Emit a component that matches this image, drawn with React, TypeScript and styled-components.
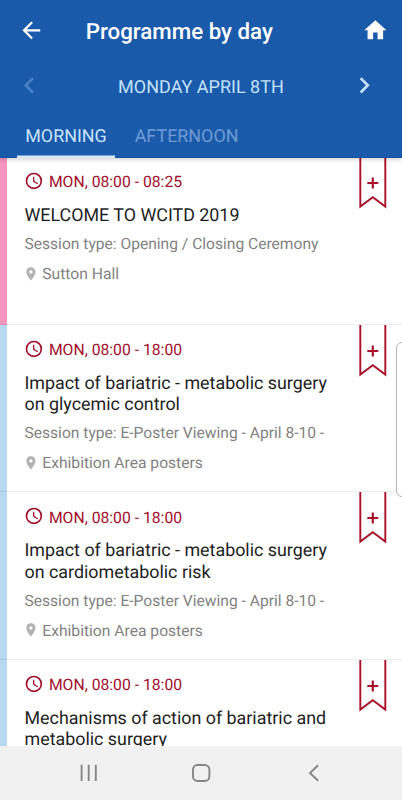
import React from 'react';
import styled, { createGlobalStyle } from 'styled-components';

const Global = createGlobalStyle`
  * { box-sizing: border-box; }
  body { margin: 0; background: #fff; font-family: Roboto, sans-serif; text-rendering: geometricPrecision; }
`;

const Screen = styled.div`
  position: relative;
  display: flex;
  flex-direction: column;
  width: 402px;
  height: 800px;
  overflow: hidden;
  background: #fff;
`;

const Header = styled.header`
  position: relative;
  z-index: 1;
  flex: none;
  height: 158px;
  background: #1a5aaa;
  border-bottom: 1px solid #1451a0;
  box-shadow: 0 1px 5px rgba(0, 0, 0, 0.22);
`;

const TitleBar = styled.div`
  display: flex;
  align-items: center;
  height: 64px;
  padding: 0 13.7px 0 18.2px;
`;

const BarIcon = styled.svg`
  flex: none;
  width: 26.7px;
  height: 26.7px;
  margin-bottom: 2.6px;
  fill: #fff;
`;

const Title = styled.h1`
  flex: 1;
  margin: 0;
  padding-left: 40.8px;
  font-size: 22.3px;
  font-weight: 500;
  line-height: 65px;
  color: #fff;
`;

const DateBar = styled.div`
  display: flex;
  align-items: center;
  justify-content: space-between;
  height: 46px;
  padding: 0 21.9px 0 13px;
`;

const Chevron = styled.svg<{ $dim?: boolean }>`
  flex: none;
  width: 32.6px;
  height: 32.6px;
  margin-bottom: 3px;
  fill: ${(p) => (p.$dim ? '#4a80c6' : '#c3e2fb')};
`;

const DateLabel = styled.div`
  padding: 1px 0 0 8.8px;
  font-size: 18px;
  line-height: 47px;
  color: #c3e2fb;
`;

const Tabs = styled.nav`
  display: flex;
  height: 48px;
  padding-left: 17px;
`;

const Tab = styled.div<{ $active?: boolean }>`
  height: 48px;
  width: ${(p) => (p.$active ? '98px' : 'auto')};
  padding-left: ${(p) => (p.$active ? '8.2px' : '19.7px')};
  font-size: 17.92px;
  line-height: 53px;
  color: ${(p) => (p.$active ? '#c8e4fb' : '#6f9ad4')};
  box-shadow: ${(p) => (p.$active ? 'inset 0 -2.5px 0 #d9e9f8' : 'none')};
`;

const List = styled.main`
  flex: 1;
  min-height: 0;
  margin-top: -1px;
  overflow: hidden;
`;

const Row = styled.article<{ $stripe: string }>`
  display: flex;
  justify-content: space-between;
  height: 167.67px;
  padding-right: 15px;
  background: linear-gradient(${(p) => p.$stripe}, ${(p) => p.$stripe}) left top / 7px 100% no-repeat;
  box-shadow: inset 0 -1px 0 rgba(0, 0, 0, 0.08);
`;

const Details = styled.div`
  width: 325px;
  padding: 16.4px 0 0 24.5px;
  white-space: nowrap;
`;

const Time = styled.div`
  display: flex;
  align-items: center;
  height: 18px;
  gap: 5.1px;
  margin-left: -0.5px;
  font-size: 15.72px;
  line-height: 18px;
  color: #a10f2b;
`;

const ClockIcon = styled.svg`
  width: 19.8px;
  height: 19.8px;
  margin-bottom: 2.8px;
  fill: #a10f2b;
`;

const Name = styled.h2`
  margin: 13.5px 0 0;
  font-size: 17.88px;
  font-weight: 400;
  line-height: 21.33px;
  color: #1e1e1e;
`;

const Type = styled.div`
  margin-top: 8.7px;
  font-size: 15.6px;
  line-height: 19px;
  color: #828282;
`;

const Place = styled.div`
  display: flex;
  align-items: center;
  gap: 3.2px;
  height: 19px;
  margin: 10.2px 0 0 -1.2px;
  font-size: 15.65px;
  line-height: 19px;
  color: #828282;
`;

const PinIcon = styled.svg`
  width: 15.8px;
  height: 15.8px;
  fill: #b3b3b3;
`;

const Ribbon = styled.svg`
  flex: none;
  width: 28px;
  height: 52px;
  fill: none;
  stroke: #aa1128;
`;

const NavBar = styled.footer`
  flex: none;
  display: flex;
  align-items: center;
  justify-content: space-between;
  height: 54px;
  padding: 0 78.5px;
  background: #f1f1f1;
`;

const NavIcon = styled.svg`
  width: 20px;
  height: 20px;
  fill: none;
  stroke: #868686;
  stroke-width: 1.9;
`;

const EdgeHandle = styled.div`
  position: absolute;
  top: 342px;
  right: -6px;
  width: 12px;
  height: 155px;
  background: #fff;
  border: 1px solid #b4b4b4;
  border-radius: 6px;
`;

type Session = { time: string; name: string[]; type?: string; place?: string; stripe: string };

const BLUE = '#b8d8f0';

const poster = {
  time: 'MON, 08:00 - 18:00',
  type: 'Session type: E-Poster Viewing - April 8-10 -',
  place: 'Exhibition Area posters',
  stripe: BLUE,
};

const sessions: Session[] = [
  {
    time: 'MON, 08:00 - 08:25',
    name: ['WELCOME TO WCITD 2019'],
    type: 'Session type: Opening / Closing Ceremony',
    place: 'Sutton Hall',
    stripe: '#f694c0',
  },
  { ...poster, name: ['Impact of bariatric - metabolic surgery', 'on glycemic control'] },
  { ...poster, name: ['Impact of bariatric - metabolic surgery', 'on cardiometabolic risk'] },
  {
    time: 'MON, 08:00 - 18:00',
    name: ['Mechanisms of action of bariatric and', 'metabolic surgery'],
    stripe: BLUE,
  },
];

function SessionRow({ session }: { session: Session }) {
  return (
    <Row $stripe={session.stripe}>
      <Details>
        <Time>
          <ClockIcon viewBox="0 0 24 24">
            <path d="M12 2a10 10 0 1 0 0 20 10 10 0 0 0 0-20zm0 18a8 8 0 1 1 0-16 8 8 0 0 1 0 16zm.5-13H11v6l5.25 3.15.75-1.23-4.5-2.67z" />
          </ClockIcon>
          {session.time}
        </Time>
        <Name>
          {session.name.map((line, i) => (
            <React.Fragment key={line}>
              {i > 0 && <br />}
              {line}
            </React.Fragment>
          ))}
        </Name>
        {session.type && <Type>{session.type}</Type>}
        {session.place && (
          <Place>
            <PinIcon viewBox="0 0 24 24">
              <path d="M12 2C8.13 2 5 5.13 5 9c0 5.25 7 13 7 13s7-7.75 7-13c0-3.87-3.13-7-7-7zm0 9.5a2.5 2.5 0 0 1 0-5 2.5 2.5 0 0 1 0 5z" />
            </PinIcon>
            {session.place}
          </Place>
        )}
      </Details>
      <Ribbon viewBox="0 0 28 52">
        <path d="M1.3 0V49.6L13.8 40.3L26.3 49.6V0" strokeWidth="1.9" />
        <path d="M13.8 20.5v11M8.3 26h11" strokeWidth="2.2" />
      </Ribbon>
    </Row>
  );
}

export default function App() {
  return (
    <Screen>
      <Global />
      <Header>
        <TitleBar>
          <BarIcon viewBox="0 0 24 24">
            <path d="M20 11H7.83l5.59-5.59L12 4l-8 8 8 8 1.41-1.41L7.83 13H20v-2z" />
          </BarIcon>
          <Title>Programme by day</Title>
          <BarIcon viewBox="0 0 24 24">
            <path d="M10 20v-6h4v6h5v-8h3L12 3 2 12h3v8z" />
          </BarIcon>
        </TitleBar>
        <DateBar>
          <Chevron $dim viewBox="0 0 24 24">
            <path d="M15.41 7.41L14 6l-6 6 6 6 1.41-1.41L10.83 12z" />
          </Chevron>
          <DateLabel>MONDAY APRIL 8TH</DateLabel>
          <Chevron viewBox="0 0 24 24">
            <path d="M10 6L8.59 7.41 13.17 12l-4.58 4.59L10 18l6-6z" />
          </Chevron>
        </DateBar>
        <Tabs>
          <Tab $active>MORNING</Tab>
          <Tab>AFTERNOON</Tab>
        </Tabs>
      </Header>
      <List>
        {sessions.map((session, i) => (
          <SessionRow key={i} session={session} />
        ))}
      </List>
      <NavBar>
        <NavIcon viewBox="0 0 20 20">
          <path d="M2.6 1.8V18M9.7 1.8V18M16.8 1.8V18" />
        </NavIcon>
        <NavIcon viewBox="0 0 20 20">
          <rect x="2" y="2" width="16.4" height="16" rx="4.5" />
        </NavIcon>
        <NavIcon viewBox="0 0 20 20">
          <path d="M14.1 2.2L6 10L14.1 17.8" />
        </NavIcon>
      </NavBar>
      <EdgeHandle />
    </Screen>
  );
}
